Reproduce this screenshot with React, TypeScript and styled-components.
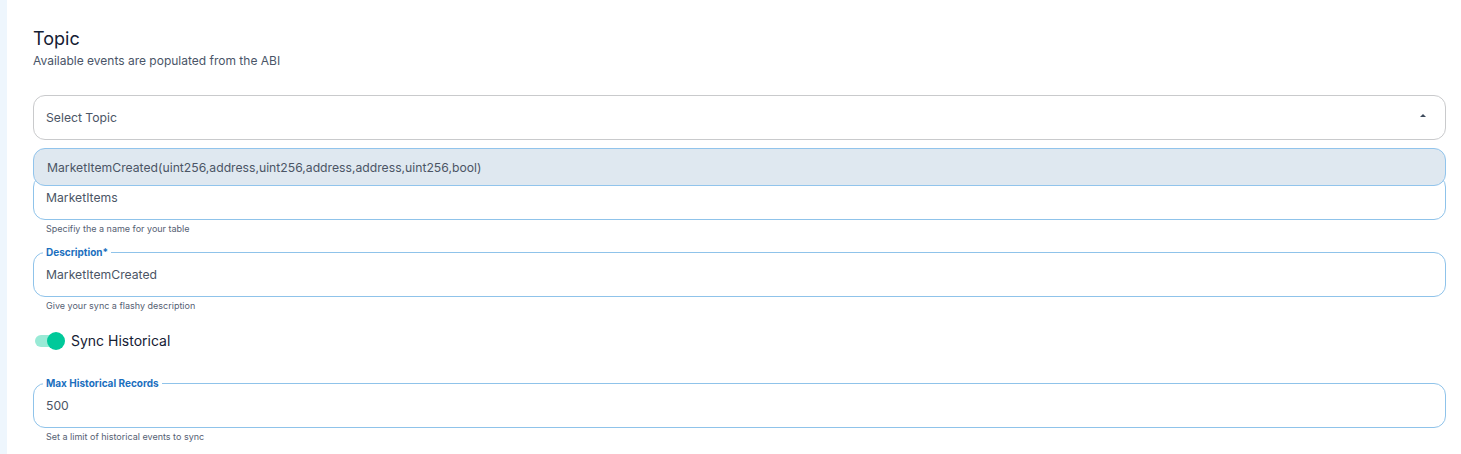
import styled, { createGlobalStyle } from "styled-components";

const GlobalStyle = createGlobalStyle`
  html, body {
    margin: 0;
    padding: 0;
    background: #ffffff;
  }
  body {
    font-family: Inter, "Noto Sans", sans-serif;
    color: #1a2332;
  }
`;

const Page = styled.div`
  display: flex;
  width: 1461px;
  height: 454px;
  overflow: hidden;
`;

const Rail = styled.div`
  width: 7px;
  flex-shrink: 0;
  background: #eef6fd;
`;

const Main = styled.main`
  flex: 1;
  padding: 27px 15px 0 26px;
  display: flex;
  flex-direction: column;
`;

const Title = styled.h2`
  margin: 0;
  font-size: 18px;
  line-height: 24px;
  font-weight: 400;
  color: #152033;
`;

const Subtitle = styled.p`
  margin: 1px 0 0;
  font-size: 12px;
  line-height: 17px;
  color: #4a5568;
`;

const SelectWrap = styled.div`
  position: relative;
  margin-top: 26px;
`;

const SelectBox = styled.div`
  height: 45px;
  box-sizing: border-box;
  border: 1px solid #c9cacc;
  border-radius: 12px;
  display: flex;
  align-items: center;
  justify-content: space-between;
  padding: 0 19px 0 12px;
  font-size: 12.2px;
  color: #4b5565;
`;

const Caret = styled.span`
  width: 0;
  height: 0;
  border-left: 3px solid transparent;
  border-right: 3px solid transparent;
  border-bottom: 3px solid #3d4a5c;
  margin-bottom: 4px;
`;

const Menu = styled.ul`
  position: absolute;
  top: 53px;
  left: 0;
  right: 0;
  margin: 0;
  padding: 0;
  list-style: none;
  z-index: 2;
`;

const MenuItem = styled.li`
  height: 38px;
  box-sizing: border-box;
  border: 1px solid #91c4ec;
  border-radius: 12px;
  background: #dfe8f0;
  display: flex;
  align-items: center;
  padding-left: 13px;
  font-size: 12.2px;
  color: #4b5565;
`;

const Field = styled.div<{ $top: number }>`
  margin-top: ${(p) => p.$top}px;
`;

const Outline = styled.div`
  height: 45px;
  box-sizing: border-box;
  border: 1px solid #8fc3ea;
  border-radius: 12px;
  padding: 0 12px;
  display: flex;
  flex-direction: column;
`;

const Legend = styled.span`
  align-self: flex-start;
  margin: -7px 0 0 -3px;
  padding: 0 3px;
  height: 12px;
  line-height: 12px;
  background: #ffffff;
  font-size: 10px;
  font-weight: 700;
  color: #1b6fbe;
`;

const Value = styled.div<{ $shift: number }>`
  flex: 1;
  display: flex;
  align-items: center;
  margin-top: ${(p) => p.$shift}px;
  font-size: 12.2px;
  color: #4b5565;
`;

const Helper = styled.div`
  padding-left: 13px;
  margin-top: 3px;
  font-size: 9px;
  line-height: 12px;
  color: #566173;
`;

const SwitchRow = styled.label`
  display: flex;
  align-items: center;
  gap: 9px;
  margin-top: 20px;
  padding-left: 2px;
  font-size: 14px;
  color: #152033;
`;

const Track = styled.span<{ $on: boolean }>`
  width: 27px;
  height: 12px;
  border-radius: 6px;
  background: ${(p) => (p.$on ? "#99ead6" : "#cfd6dd")};
  display: flex;
  align-items: center;
  justify-content: ${(p) => (p.$on ? "flex-end" : "flex-start")};
`;

const Thumb = styled.span<{ $on: boolean }>`
  width: 18px;
  height: 18px;
  border-radius: 50%;
  margin-right: -3px;
  background: ${(p) => (p.$on ? "#00c99a" : "#ffffff")};
`;

type InputProps = {
  label?: string;
  value: string;
  helper: string;
  top: number;
};

function OutlinedInput({ label, value, helper, top }: InputProps) {
  return (
    <Field $top={top}>
      <Outline>
        {label && <Legend>{label}</Legend>}
        <Value $shift={label ? -5 : 0}>{value}</Value>
      </Outline>
      <Helper>{helper}</Helper>
    </Field>
  );
}

export default function App() {
  return (
    <>
      <GlobalStyle />
      <Page>
        <Rail />
        <Main>
          <Title>Topic</Title>
          <Subtitle>Available events are populated from the ABI</Subtitle>

          <SelectWrap>
            <SelectBox>
              <span>Select Topic</span>
              <Caret />
            </SelectBox>
            <Menu>
              <MenuItem>MarketItemCreated(uint256,address,uint256,address,address,uint256,bool)</MenuItem>
            </Menu>
          </SelectWrap>

          {/* the open menu hides this field's label */}
          <OutlinedInput top={35} value="MarketItems" helper="Specifiy the a name for your table" />
          <OutlinedInput top={17} label="Description*" value="MarketItemCreated" helper="Give your sync a flashy description" />

          <SwitchRow>
            <Track $on>
              <Thumb $on />
            </Track>
            Sync Historical
          </SwitchRow>

          <OutlinedInput top={34} label="Max Historical Records" value="500" helper="Set a limit of historical events to sync" />
        </Main>
      </Page>
    </>
  );
}
